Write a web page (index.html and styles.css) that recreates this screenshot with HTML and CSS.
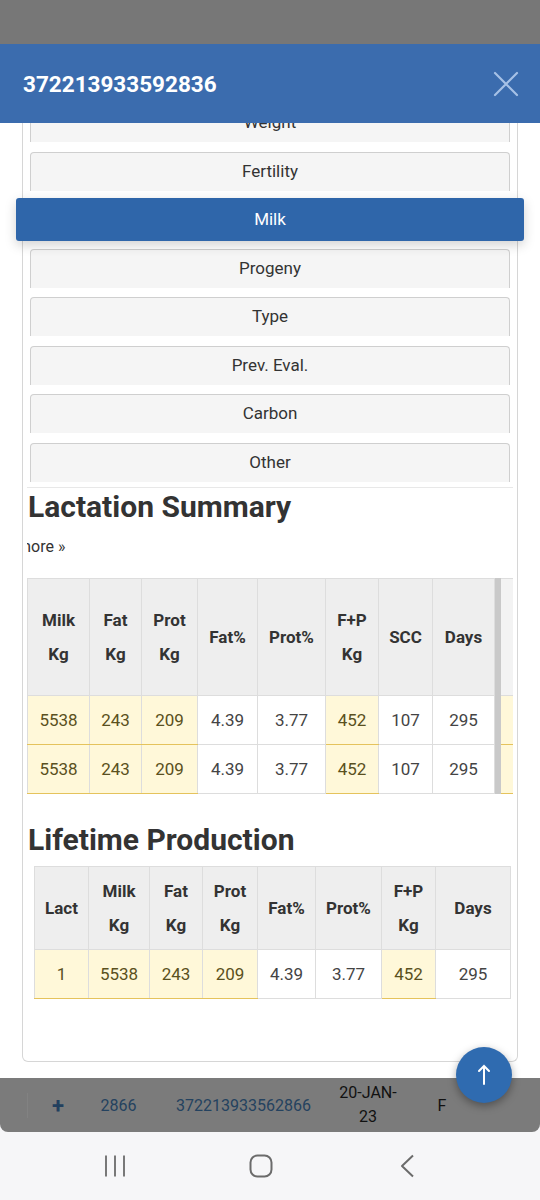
FILE: index.html
```html
<!DOCTYPE html>
<html lang="en">
<head>
    <meta charset="UTF-8">
    <meta name="viewport" content="width=device-width, initial-scale=1.0">
    <title>372213933592836</title>
    <link rel="stylesheet" href="styles.css">
</head>
<body>
<div class="screen">
    <div class="dim-top"></div>

    <div class="modal">
        <div class="modal-header">
            <h1>372213933592836</h1>
            <svg class="close" viewBox="0 0 26 26" aria-label="Close">
                <path d="M2 2 L24 24 M24 2 L2 24" stroke="#a6c1e6" stroke-width="2.2" fill="none" stroke-linecap="round"/>
            </svg>
        </div>

        <div class="modal-body">
            <ul class="tabs">
                <li>Weight</li>
                <li>Fertility</li>
                <li class="active">Milk</li>
                <li>Progeny</li>
                <li>Type</li>
                <li>Prev. Eval.</li>
                <li>Carbon</li>
                <li>Other</li>
            </ul>

            <div class="panel">
                <h2>Lactation Summary</h2>
                <p class="more-line"><a class="more">more &raquo;</a></p>

                <table class="grid lact">
                    <colgroup>
                        <col style="width:62px"><col style="width:52px"><col style="width:56px">
                        <col style="width:60px"><col style="width:68px"><col style="width:53px">
                        <col style="width:54px"><col style="width:62px"><col style="width:6px">
                        <col style="width:60px">
                    </colgroup>
                    <thead>
                        <tr>
                            <th>Milk<br>Kg</th>
                            <th>Fat<br>Kg</th>
                            <th>Prot<br>Kg</th>
                            <th>Fat%</th>
                            <th>Prot%</th>
                            <th>F+P<br>Kg</th>
                            <th>SCC</th>
                            <th>Days</th>
                            <th class="bar"></th>
                            <th class="faded"></th>
                        </tr>
                    </thead>
                    <tbody>
                        <tr>
                            <td class="hl">5538</td><td class="hl">243</td><td class="hl">209</td>
                            <td>4.39</td><td>3.77</td><td class="hl">452</td>
                            <td>107</td><td>295</td><td class="bar"></td><td class="hl"></td>
                        </tr>
                        <tr>
                            <td class="hl">5538</td><td class="hl">243</td><td class="hl">209</td>
                            <td>4.39</td><td>3.77</td><td class="hl">452</td>
                            <td>107</td><td>295</td><td class="bar"></td><td class="hl"></td>
                        </tr>
                    </tbody>
                </table>

                <h2 class="lifetime-title">Lifetime Production</h2>

                <table class="grid life">
                    <colgroup>
                        <col style="width:54px"><col style="width:61px"><col style="width:53px">
                        <col style="width:55px"><col style="width:58px"><col style="width:66px">
                        <col style="width:54px"><col style="width:75px">
                    </colgroup>
                    <thead>
                        <tr>
                            <th>Lact</th>
                            <th>Milk<br>Kg</th>
                            <th>Fat<br>Kg</th>
                            <th>Prot<br>Kg</th>
                            <th>Fat%</th>
                            <th>Prot%</th>
                            <th>F+P<br>Kg</th>
                            <th>Days</th>
                        </tr>
                    </thead>
                    <tbody>
                        <tr>
                            <td class="hl">1</td><td class="hl">5538</td><td class="hl">243</td>
                            <td class="hl">209</td><td>4.39</td><td>3.77</td>
                            <td class="hl">452</td><td>295</td>
                        </tr>
                    </tbody>
                </table>
            </div>
        </div>
    </div>

    <div class="lower">
        <div class="behind-row">
            <span class="plus">+</span>
            <span class="link">2866</span>
            <span class="link">372213933562866</span>
            <span class="date">20-JAN-<br>23</span>
            <span class="sex">F</span>
        </div>

        <nav class="sysnav">
            <svg class="nav-icon" width="22" height="24" viewBox="0 0 22 24">
                <path d="M2 1.5 V22.5 M11 1.5 V22.5 M20 1.5 V22.5" stroke="#6b6b6b" stroke-width="1.8" fill="none"/>
            </svg>
            <svg class="nav-icon" width="24" height="24" viewBox="0 0 24 24">
                <rect x="1.5" y="1.5" width="21" height="21" rx="7" stroke="#6b6b6b" stroke-width="2" fill="none"/>
            </svg>
            <svg class="nav-icon" width="16" height="24" viewBox="0 0 16 24">
                <path d="M14 1.5 L3 12 L14 22.5" stroke="#6b6b6b" stroke-width="2" fill="none" stroke-linejoin="round"/>
            </svg>
        </nav>
    </div>

    <button class="fab" aria-label="Back to top">
        <svg width="20" height="24" viewBox="0 0 20 24">
            <path d="M10 3 V21 M5 8 L10 3 L15 8" stroke="#fff" stroke-width="2" fill="none" stroke-linecap="round"/>
        </svg>
    </button>
</div>
</body>
</html>
```

FILE: styles.css
```css
* {
    box-sizing: border-box;
}

body {
    margin: 0;
    font-family: Roboto, "Noto Sans", sans-serif;
    background: #fff;
    color: #333;
}

.screen {
    width: 540px;
    height: 1200px;
    position: relative;
    overflow: hidden;
}

.dim-top {
    height: 44px;
    background: #777;
}

/* modal */

.modal-header {
    position: relative;
    z-index: 2;
    height: 79px;
    background: #3b6cae;
    display: flex;
    align-items: center;
    justify-content: space-between;
    padding: 0 21px 0 23px;
}

.modal-header h1 {
    margin: 0;
    font-size: 22.5px;
    font-weight: 700;
    color: #fff;
}

.close {
    width: 26px;
    height: 26px;
}

.modal-body {
    display: flow-root;
    height: 939px;
    margin: 0 22px;
    border: 1px solid #d6d6d6;
    border-top: none;
    border-radius: 0 0 6px 6px;
    background: #fff;
}

/* tabs */

.tabs {
    list-style: none;
    margin: -20px 7px 0;
    padding: 0;
}

.tabs li {
    height: 39px;
    margin-bottom: 9.5px;
    background: #f5f5f5;
    border: 1px solid #cfcfcf;
    border-bottom: none;
    border-radius: 4px 4px 0 0;
    text-align: center;
    font-size: 17px;
    line-height: 37px;
    color: #333;
}

.tabs li:last-child {
    margin-bottom: 5.5px;
}

.tabs li.active {
    height: 43px;
    margin: -2px -14px 7.5px;
    background: #2f66aa;
    border: none;
    border-radius: 3px;
    color: #fff;
    line-height: 43px;
    box-shadow: 0 4px 12px rgba(0, 0, 0, 0.18);
    position: relative;
}

/* content */

.panel {
    margin: 0 4px;
    border-top: 1px solid #e8e8e8;
    overflow: hidden;
}

.panel h2 {
    margin: 2px 0 0 1px;
    font-size: 30px;
    font-weight: 700;
    line-height: 34px;
    color: #333;
}

.more-line {
    margin: 11px 0 0;
    font-size: 16px;
    line-height: 24px;
}

.more {
    margin-left: -10px;
    color: #333;
}

.grid {
    border-collapse: collapse;
    table-layout: fixed;
}

.grid th,
.grid td {
    border: 1px solid #ddd;
    padding: 0;
    text-align: center;
}

.grid th {
    background: #eee;
    font-size: 17px;
    font-weight: 700;
    line-height: 34px;
    color: #333;
}

.grid td {
    height: 49px;
    font-size: 17px;
    color: #444;
}

.grid td.hl {
    background: #fff8d9;
    color: #5a5020;
    border-bottom-color: #e5c35c;
}

.grid .bar {
    background: #c9c9c9;
    border-color: #c9c9c9;
}

.grid th.faded {
    background: #f3f3f3;
}

.lact {
    width: 533px;
    margin-top: 19px;
}

.lact th {
    height: 117px;
}

.lifetime-title {
    padding-top: 27px;
}

.life {
    width: 476px;
    margin: 9px 0 0 7px;
}

.life th {
    height: 83px;
}

/* page behind the modal */

.lower {
    margin-top: 16px;
    background: #f6f6f8;
}

.behind-row {
    height: 54px;
    padding-left: 27px;
    background: #7b7b7b;
    border-radius: 0 0 8px 8px;
    display: grid;
    grid-template-columns: 61px 61px 189px 60px 88px;
    align-items: center;
    text-align: center;
    font-size: 16px;
}

.behind-row .plus {
    font-size: 22px;
    font-weight: 700;
    color: #22405f;
    border-left: 1px solid rgba(255, 255, 255, 0.06);
}

.behind-row .link {
    color: #24425f;
}

.behind-row .date {
    line-height: 24px;
    color: #111;
}

.behind-row .sex {
    color: #111;
}

.sysnav {
    height: 68px;
    padding-right: 18px;
    display: grid;
    grid-template-columns: repeat(3, 146px);
    justify-content: center;
    justify-items: center;
    align-items: center;
}

.fab {
    position: absolute;
    left: 456px;
    top: 1047px;
    width: 56px;
    height: 56px;
    border: none;
    border-radius: 50%;
    background: #2f6bb0;
    box-shadow: 0 3px 8px rgba(0, 0, 0, 0.35);
    display: flex;
    align-items: center;
    justify-content: center;
    padding: 0;
}
```
